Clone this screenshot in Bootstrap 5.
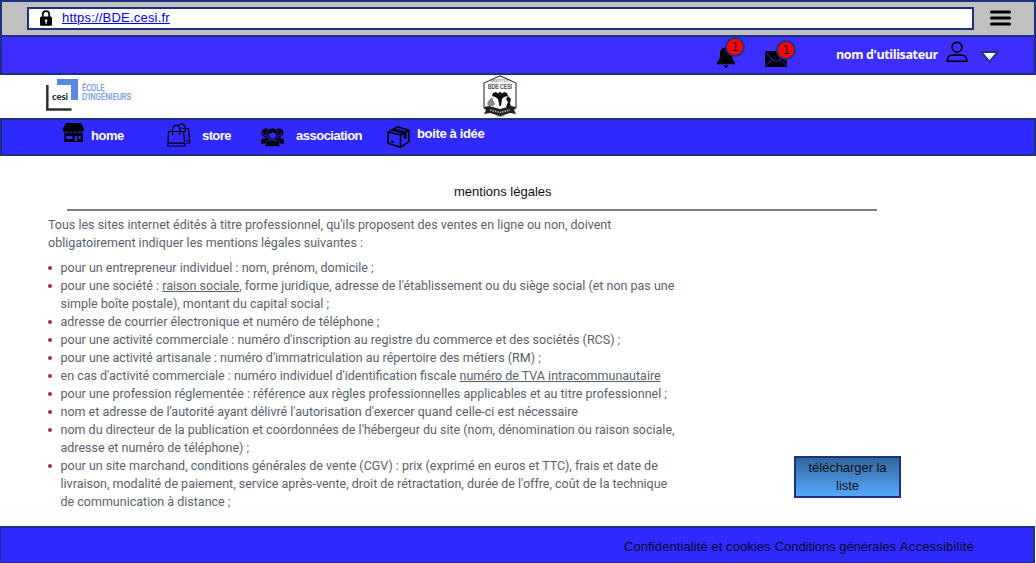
<!DOCTYPE html>
<html lang="fr">
<head>
<meta charset="utf-8">
<meta name="viewport" content="width=device-width, initial-scale=1">
<title>BDE CESI - mentions légales</title>
<link href="https://cdn.jsdelivr.net/npm/bootstrap@5.3.0/dist/css/bootstrap.min.css" rel="stylesheet">
<style>
  :root { --edge: #1c327e; }
  body { font-family: "Liberation Sans", Arial, sans-serif; font-size: 13px; line-height: 18px; color: #111; background: #fff; height: 563px; overflow: hidden; }
  svg { display: block; flex: none; overflow: visible; }
  .browser-bar { height: 37px; background: #c0c0c0; border: 2px solid var(--edge); padding: 5px 23px 0 25px; }
  .url-box { width: 947px; height: 23px; background: #fff; border: 2px solid var(--edge); padding-left: 11px; }
  .url-box a { color: #0000ee; letter-spacing: .2px; margin-left: 10px; line-height: 17px; }
  .user-bar { height: 38px; background: #3c2eff; border: 2px solid var(--edge); border-top: 0; }
  .alert-icon { position: relative; flex: none; }
  .count { position: absolute; width: 20px; height: 20px; border: 2px solid var(--edge); border-radius: 50%; background: #f00; color: #111; text-align: center; line-height: 16px; }
  .user-name { width: 102px; flex: none; font: bold 12.5px/18px "Open Sans", sans-serif; letter-spacing: -.38px; color: #fff; white-space: nowrap; }
  .logo-strip { height: 43px; }
  .main-nav { height: 38px; background: #2f2aff; border: 2px solid var(--edge); padding-left: 60px; }
  .main-nav a { color: #fff; font-weight: bold; text-decoration: none; white-space: nowrap; letter-spacing: -.5px; }
  main { height: 370px; }
  .title-block { width: 810px; height: 55px; margin-left: 67px; border-bottom: 2px solid #7f7f7f; }
  .page-title { font-size: 13px; line-height: 18px; font-weight: normal; margin: 0; padding: 27px 0 9px 387px; }
  .legal { width: 700px; padding: 5px 0 0 48px; font: 12.5px/18px Roboto, sans-serif; color: #5a5f6e; white-space: nowrap; }
  .legal p { margin: 0 0 7px; }
  .legal ul { list-style: none; margin: 0; padding-left: 12.5px; }
  .legal li::before { content: ""; display: inline-block; width: 4px; height: 4px; border-radius: 50%; background: #b02a46; margin: 0 8.5px 2.5px -12.5px; vertical-align: baseline; }
  .legal a { color: inherit; text-decoration: underline; }
  .btn-download { width: 107px; height: 42px; padding: 0; margin: 0 135px 28px 0; border: 2px solid var(--edge); border-radius: 0; background: linear-gradient(#33659c, #55a8ff); font-size: 13px; line-height: 18px; color: #111; letter-spacing: -.05px; }
  footer { width: 1035px; height: 37px; background: #2f2aff; border: 2px solid var(--edge); border-width: 2px 2px 1px 1px; padding: 3px 59px 0 0; }
  footer a { color: #08082a; text-decoration: none; letter-spacing: .08px; }
  footer a:nth-child(2) { letter-spacing: -.05px; }
  footer a:nth-child(3) { letter-spacing: .2px; }
</style>
</head>
<body>
<header>
  <div class="browser-bar d-flex justify-content-between">
    <div class="url-box d-flex">
      <svg width="12" height="16" viewBox="0 0 12 16" style="margin-top:1px"><path d="M2.8 8V4.3a3.2 3.2 0 0 1 6.4 0V8" fill="none" stroke="#000" stroke-width="1.7"/><rect y="6.5" width="12" height="9.3" rx="1.5"/><path d="M5 9.500h2.200v2.200H6.600V14h-1v-2.300H5z" fill="#fff"/></svg>
      <a href="#">https://BDE.cesi.fr</a>
    </div>
    <svg width="21" height="16" viewBox="0 0 21 16" style="margin-top:3px"><path d="M1.500 2h18M1.500 8h18M1.500 14h18" stroke="#000" stroke-width="3" stroke-linecap="round"/></svg>
  </div>
  <div class="user-bar d-flex justify-content-end">
    <div class="alert-icon" style="width:18px;margin:9px 30px 0 0">
      <svg width="18" height="22" viewBox="0 0 18 22"><path d="M9 0c1 0 1.500.8 1.500 1.800C14 2.500 15 5 15 9c0 4 1 5.500 3 7.500v1.700H0v-1.700C2 14.500 3 13 3 9c0-4 1-6.500 4.500-7.200C7.500.8 8 0 9 0zM6.500 19.300h5L9.500 22h-1z"/></svg>
      <span class="count" style="left:8px;top:-9px">1</span>
    </div>
    <div class="alert-icon" style="width:22px;margin:14px 49px 0 0">
      <svg width="22" height="16" viewBox="0 0 22 16"><path d="M0 0h22v16H0z"/><path d="M0 1l8.500 8.500Q11 11.500 13.500 9.500L22 1M0 15l7.500-6.500M22 15l-7.500-6.500" fill="none" stroke="#3c2eff" stroke-width=".8"/></svg>
      <span class="count" style="left:11px;top:-11px">1</span>
    </div>
    <span class="user-name" style="margin:9px 9px 0 0">nom d'utilisateur</span>
    <svg width="20" height="20" viewBox="0 0 20 20" style="margin-top:5px"><g fill="none" stroke="#000" stroke-width="1.600"><circle cx="10" cy="5.300" r="4.900"/><path d="M.2 19.200c0-4 2-6.200 6-6.200h7.600c4 0 6 2.200 6 6.200z" stroke-linejoin="round"/></g></svg>
    <svg width="19" height="12" viewBox="0 0 19 12" style="margin:14px 35px 0 13px"><path d="M1.500 1h16l-8 9.500z" fill="#fff" stroke="#1c327e" stroke-width="1.800"/></svg>
  </div>
  <div class="logo-strip d-flex">
    <svg width="90" height="34" viewBox="0 0 90 34" style="margin:3px 0 0 46px"><path d="M11 1h21v21h-7V7H11z" fill="#5a8ade"/><path d="M1.300 7v24.500H25.500" fill="none" stroke="#303030" stroke-width="2.500"/><text x="6" y="22" font-family="Lato" font-size="9.500" font-weight="900" fill="#303030" textLength="16">cesi</text><g font-family="Roboto" font-size="9" fill="#6d96dc" stroke="#6d96dc" stroke-width=".2"><text x="36" y="12.500" textLength="22.500" lengthAdjust="spacingAndGlyphs">ÉCOLE</text><text x="36" y="22" textLength="49" lengthAdjust="spacingAndGlyphs">D'INGÉNIEURS</text></g></svg>
    <svg width="34" height="43" viewBox="0 0 34 43" style="margin-left:347px"><path d="M17 .8L33 8v25L17 41 1 33V8z" fill="#fff" stroke="#333" stroke-width="1.100"/><text x="8" y="7" font-size="4" fill="#444" textLength="18" lengthAdjust="spacingAndGlyphs">INSTITUT</text><text x="5" y="14" font-size="7" fill="#333" stroke="#333" stroke-width=".2" textLength="24" lengthAdjust="spacingAndGlyphs">BDE CESI</text><path d="M10 18l3-1 2 1.500 2-2 2 2 2-1.500 3 1 1 3-4 1-2 2-1 7h-1.500l-1.500-7-3-2-3-1zM25 21l3 3-1 4 1 4h-5l2-5-2-3z" fill="#111"/><path d="M4 29l2-4 3-3 1 3 2 4-2 2H6z" fill="#888"/><path d="M1 32l5-1 11 3 11-3 5 1-2 3 2 4-6-1-10 3-10-3-6 1 2-4z" fill="#222"/><path d="M7 35l10 2.500L27 35" fill="none" stroke="#aaa" stroke-width="1.600" stroke-dasharray="1.500 1"/><text x="12.500" y="41.500" font-size="4" fill="#444">1958</text></svg>
  </div>
  <nav class="main-nav d-flex">
    <svg width="22" height="20" viewBox="0 0 22 20" style="margin-top:3px"><path d="M4 0h15l3 6c.5 2.500-2.500 4-4.300 2-1 2-3.500 2-4.300 0-1 2-3.500 2-4.500 0-1 2-3.500 2-4.300 0C3 10 .2 8.500.7 6z"/><path d="M2.300 9.800h18.500V19H2.300zm2 3.200v3.200h6.200V13zm8.500 0v5h2.200v-5zm3.700 0v3.200h2.200V13z" fill-rule="evenodd"/></svg>
    <a href="#" style="margin:7px 43px 0 7px;width:33px">home</a>
    <svg width="24" height="24" viewBox="0 0 24 24" style="margin:3px 0 0 0" fill="none" stroke="#000" stroke-width="1.200"><path d="M1.500 8.500h15l1.500 14.500H.8zM1 20.200h17M5.500 12V6a3.700 3.700 0 0 1 7.400 0v6M11 2.500c3-3 7.200-1.500 7.200 2.500v4.500M15 5.500h6.500L22.800 20H19M19 17.500h3.500"/></svg>
    <a href="#" style="margin:7px 30px 0 11px;width:29px;letter-spacing:-.6px">store</a>
    <svg width="23" height="20" viewBox="0 0 24 20" style="margin-top:7px"><circle cx="5" cy="5.500" r="4.500"/><circle cx="19" cy="5.500" r="4.500"/><path d="M0 17v-3c0-2 2.500-3 5-3.500h14c2.500.5 5 1.500 5 3.500v3z"/><path d="M4.500 20v-2.500c0-2.500 2-3.500 5-4.500h5c3 1 5 2 5 4.500V20z" stroke="#2f2aff" stroke-width=".8"/><circle cx="12" cy="6.500" r="6" stroke="#2f2aff" stroke-width=".8"/><path d="M8 6.500c2 0 3.500-.8 4.500-2 .6 1 1.600 1.700 3.500 2 0 3-1.700 5-4 5s-4-2-4-5z" fill="#2f2aff"/><path d="M2.500 5.500c0 1.800 1 3 2.500 3M21.500 5.500c0 1.800-1 3-2.500 3" stroke="#2f2aff" fill="none"/></svg>
    <a href="#" style="margin:7px 24px 0 12px;width:67px">association</a>
    <svg width="23" height="22" viewBox="0 0 23 22" style="margin-top:6px" fill="none" stroke="#000" stroke-width="1.500" stroke-linejoin="round"><path d="M1 6.200L10.500.8 22 4.500 13.500 9zM1 6.200v11L13.500 21.300V9M13.500 21.300L22 15.500v-11"/><path d="M4.800 4.200L17.300 7.500M7 3l12 3.200M17.300 7.500v4.800l1.900-1.200V6M4 15.300l3 1"/></svg>
    <a href="#" style="margin:5px 0 0 7px;letter-spacing:-.35px">boite à idée</a>
  </nav>
</header>
<main class="d-flex flex-column">
  <div class="title-block"><h1 class="page-title">mentions légales</h1></div>
  <div class="d-flex justify-content-between align-items-end flex-grow-1">
    <section class="legal align-self-start">
      <p>Tous les sites internet édités à titre professionnel, qu'ils proposent des ventes en ligne ou non, doivent<br>obligatoirement indiquer les mentions légales suivantes :</p>
      <ul>
        <li>pour un entrepreneur individuel : nom, prénom, domicile ;</li>
        <li>pour une société : <a href="#">raison sociale</a>, forme juridique, adresse de l'établissement ou du siège social (et non pas une<br>simple boîte postale), montant du capital social ;</li>
        <li>adresse de courrier électronique et numéro de téléphone ;</li>
        <li>pour une activité commerciale : numéro d'inscription au registre du commerce et des sociétés (RCS) ;</li>
        <li>pour une activité artisanale : numéro d'immatriculation au répertoire des métiers (RM) ;</li>
        <li>en cas d'activité commerciale : numéro individuel d'identification fiscale <a href="#">numéro de TVA intracommunautaire</a></li>
        <li>pour une profession réglementée : référence aux règles professionnelles applicables et au titre professionnel ;</li>
        <li>nom et adresse de l'autorité ayant délivré l'autorisation d'exercer quand celle-ci est nécessaire</li>
        <li>nom du directeur de la publication et coordonnées de l'hébergeur du site (nom, dénomination ou raison sociale,<br>adresse et numéro de téléphone) ;</li>
        <li>pour un site marchand, conditions générales de vente (CGV) : prix (exprimé en euros et TTC), frais et date de<br>livraison, modalité de paiement, service après-vente, droit de rétractation, durée de l'offre, coût de la technique<br>de communication à distance ;</li>
      </ul>
    </section>
    <button class="btn btn-download" type="button">télécharger la<br>liste</button>
  </div>
</main>
<footer class="d-flex justify-content-end align-items-center gap-1">
  <a href="#">Confidentialité et cookies</a>
  <a href="#">Conditions générales</a>
  <a href="#">Accessibilité</a>
</footer>
<script src="https://cdn.jsdelivr.net/npm/bootstrap@5.3.0/dist/js/bootstrap.bundle.min.js"></script>
</body>
</html>
